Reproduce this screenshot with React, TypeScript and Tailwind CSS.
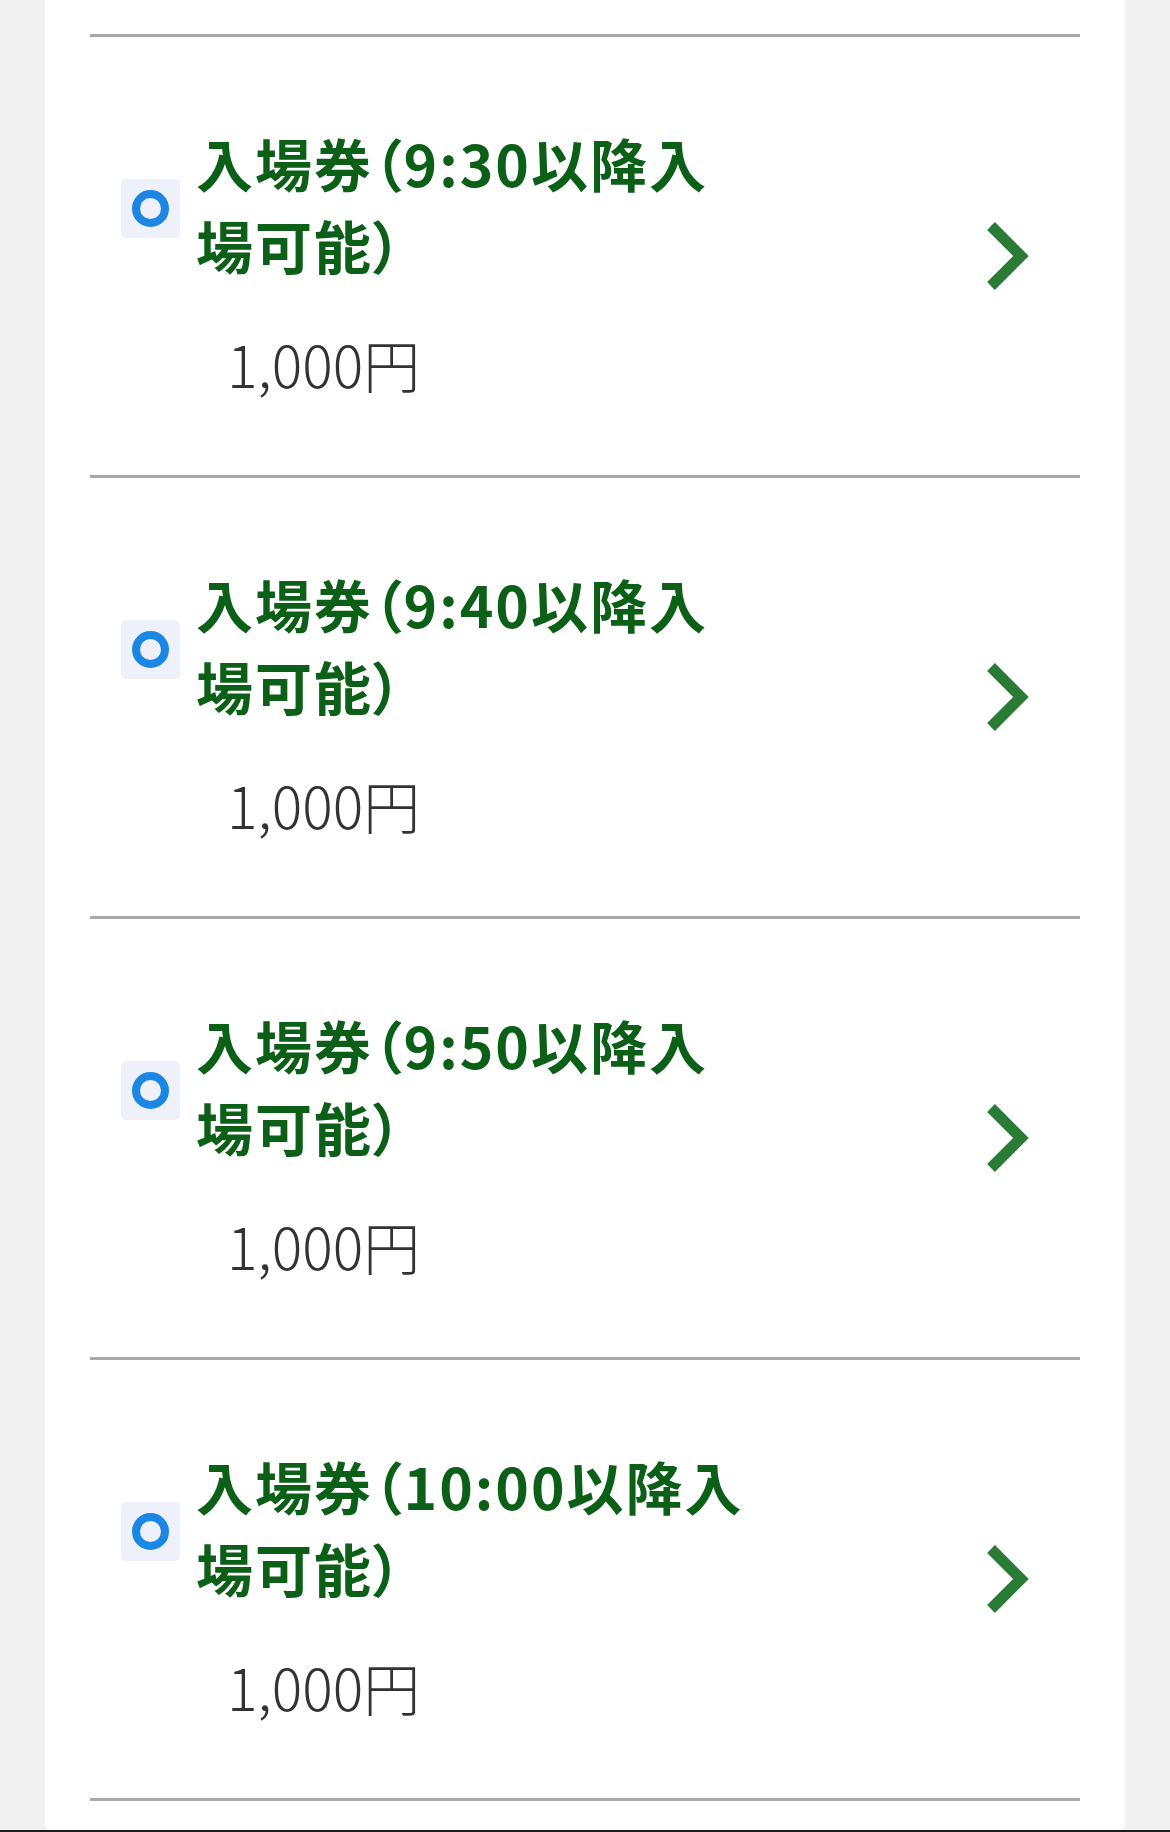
import React from "react";

const tickets = ["9:30", "9:40", "9:50", "10:00"];

function Radio() {
  return (
    <div className="mt-[10px] w-[59px] h-[59px] shrink-0 rounded-[5px] bg-[#eef1f9] flex items-center justify-center">
      <div className="w-[37px] h-[37px] rounded-full border-[8px] border-[#1b86e3]" />
    </div>
  );
}

function Chevron() {
  return (
    <svg width="44" height="70" viewBox="0 0 44 70" className="shrink-0">
      <polyline
        points="6,5 36,35 6,65"
        fill="none"
        stroke="#2a7b35"
        strokeWidth="11"
        strokeLinejoin="miter"
      />
    </svg>
  );
}

function TicketRow({ time }: { time: string }) {
  return (
    <div className="h-[441px] border-t-[3px] border-[#a9a9a9] flex items-center justify-between">
      <div className="flex flex-col pt-[13px]">
        <div className="flex items-center gap-[16px] ml-[31px]">
          <Radio />
          <p className="text-[57px] leading-[82px] font-bold tracking-[2px] text-[#0c5f16] [font-feature-settings:'palt']">
            入場券（{time}以降入
            <br />
            場可能）
          </p>
        </div>
        <p className="mt-[37px] ml-[137px] text-[57px] leading-[82px] font-light text-[#333333]">
          1,000円
        </p>
      </div>
      <div className="mr-[51px]">
        <Chevron />
      </div>
    </div>
  );
}

export default function App() {
  return (
    <div
      className="min-h-[1832px] bg-[#f1f1f1] flex flex-col"
      style={{ fontFamily: '"Noto Sans CJK JP", "Noto Sans", sans-serif' }}
    >
      <div className="mx-[45px] bg-white pt-[34px] px-[45px] pb-[29px] rounded-b-[6px]">
        {tickets.map((t) => (
          <TicketRow key={t} time={t} />
        ))}
        <div className="border-t-[3px] border-[#a9a9a9]" />
      </div>
      <div className="h-[3px] bg-[#1c1c1c]" />
    </div>
  );
}
